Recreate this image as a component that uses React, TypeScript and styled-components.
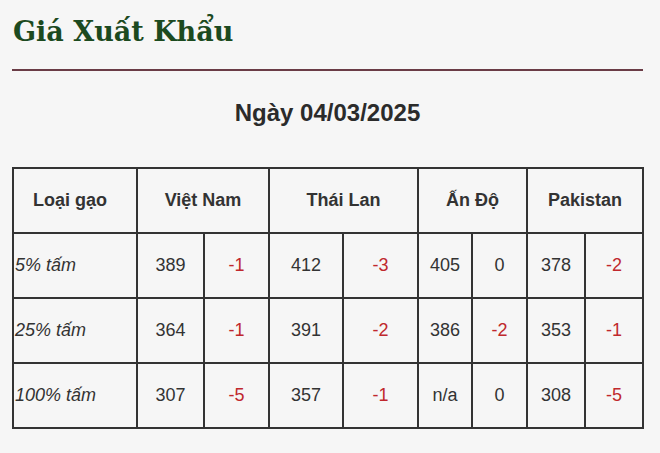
import React from "react";
import styled, { createGlobalStyle } from "styled-components";

const GlobalStyle = createGlobalStyle`
  html, body {
    margin: 0;
    padding: 0;
    background: #f6f6f6;
  }
`;

const Page = styled.div`
  display: flex;
  flex-direction: column;
  padding: 12px 17px 0 12px;
  width: 660px;
  box-sizing: border-box;
`;

const Title = styled.h2`
  margin: 4px 0 0 1px;
  font-family: "DejaVu Serif", Georgia, serif;
  font-weight: bold;
  font-size: 27px;
  line-height: 32px;
  color: #1c4a1f;
`;

const Rule = styled.hr`
  margin: 21px 0 0 0;
  border: none;
  border-top: 2px solid #6a3c46;
  width: 631px;
`;

const DateLine = styled.div`
  margin-top: 28px;
  text-align: center;
  font-family: "Liberation Sans", Arial, sans-serif;
  font-weight: bold;
  font-size: 24px;
  line-height: 28px;
  color: #2b2b2b;
`;

const Table = styled.table`
  margin-top: 40px;
  border-collapse: collapse;
  table-layout: fixed;
  width: 631px;
  font-family: "Liberation Sans", Arial, sans-serif;
  font-size: 18px;
  color: #333;
`;

const Head = styled.th<{ $first?: boolean }>`
  border: 2px solid #333;
  height: 63px;
  padding: ${(p) => (p.$first ? "0 10px 0 0" : "0")};
  font-weight: bold;
  text-align: center;
`;

const Label = styled.td`
  border: 2px solid #333;
  height: 63px;
  padding: 0 0 0 1px;
  font-style: italic;
  text-align: left;
`;

const Cell = styled.td<{ $change?: boolean }>`
  border: 2px solid #333;
  height: 63px;
  padding: 0;
  text-align: center;
  color: ${(p) => (p.$change ? "#c0282d" : "#333")};
`;

const widths = [124, 67, 65, 74, 75, 54, 55, 58, 58];

const countries = ["Việt Nam", "Thái Lan", "Ấn Độ", "Pakistan"];

const rows = [
  { label: "5% tấm", values: ["389", "-1", "412", "-3", "405", "0", "378", "-2"] },
  { label: "25% tấm", values: ["364", "-1", "391", "-2", "386", "-2", "353", "-1"] },
  { label: "100% tấm", values: ["307", "-5", "357", "-1", "n/a", "0", "308", "-5"] },
];

export default function App() {
  return (
    <>
      <GlobalStyle />
      <Page>
        <Title>Giá Xuất Khẩu</Title>
        <Rule />
        <DateLine>Ngày 04/03/2025</DateLine>
        <Table>
          <colgroup>
            {widths.map((w, i) => (
              <col key={i} style={{ width: w }} />
            ))}
          </colgroup>
          <thead>
            <tr>
              <Head $first>Loại gạo</Head>
              {countries.map((c) => (
                <Head key={c} colSpan={2}>
                  {c}
                </Head>
              ))}
            </tr>
          </thead>
          <tbody>
            {rows.map((r) => (
              <tr key={r.label}>
                <Label>{r.label}</Label>
                {r.values.map((v, i) => (
                  <Cell key={i} $change={i % 2 === 1 && v !== "0"}>
                    {v}
                  </Cell>
                ))}
              </tr>
            ))}
          </tbody>
        </Table>
      </Page>
    </>
  );
}
